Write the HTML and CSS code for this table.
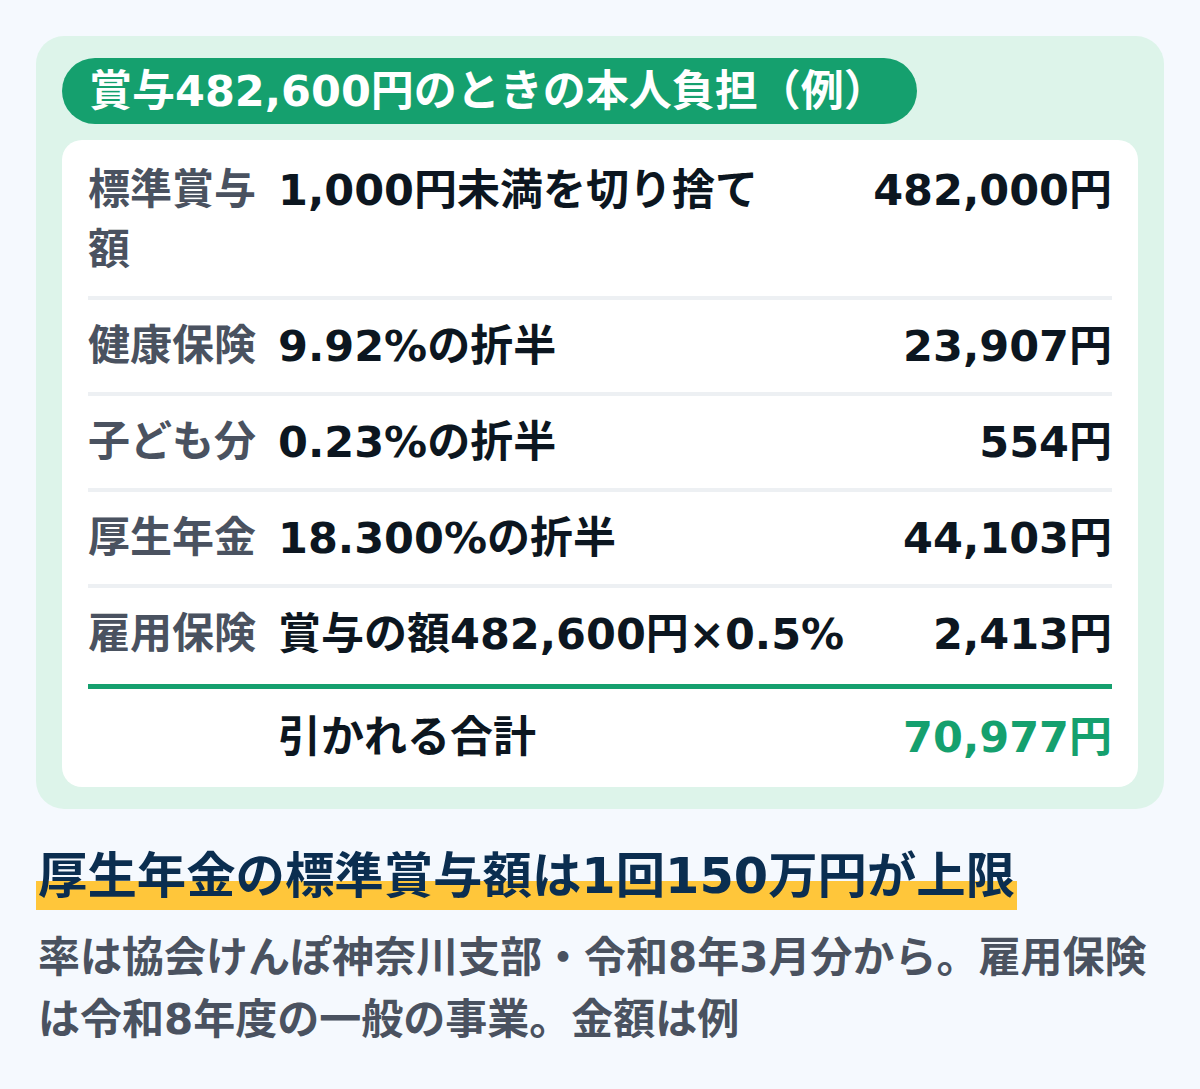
FILE: index.html
```html
<!DOCTYPE html>
<html lang="ja">
<head>
<meta charset="utf-8">
<title>賞与の本人負担</title>
<link rel="stylesheet" href="styles.css">
</head>
<body>
<section class="panel">
  <div class="pill">賞与482,600円のときの本人負担（例）</div>
  <div class="card">
    <div class="row">
      <div class="label">標準賞与額</div>
      <div class="value">1,000円未満を切り捨て</div>
      <div class="amount">482,000円</div>
    </div>
    <div class="row">
      <div class="label">健康保険</div>
      <div class="value">9.92%の折半</div>
      <div class="amount">23,907円</div>
    </div>
    <div class="row">
      <div class="label">子ども分</div>
      <div class="value">0.23%の折半</div>
      <div class="amount">554円</div>
    </div>
    <div class="row">
      <div class="label">厚生年金</div>
      <div class="value">18.300%の折半</div>
      <div class="amount">44,103円</div>
    </div>
    <div class="row row-last">
      <div class="label">雇用保険</div>
      <div class="value">賞与の額482,600円×0.5%</div>
      <div class="amount">2,413円</div>
    </div>
    <div class="row row-total">
      <div class="label"></div>
      <div class="value">引かれる合計</div>
      <div class="amount amount-total">70,977円</div>
    </div>
  </div>
</section>
<h2 class="heading"><span class="hl">厚生年金の標準賞与額は1回150万円が上限</span></h2>
<p class="note">率は協会けんぽ神奈川支部・令和8年3月分から。雇用保険は令和8年度の一般の事業。金額は例</p>
</body>
</html>
```
FILE: styles.css
```css
* { box-sizing: border-box; }

body {
  margin: 0;
  padding: 36px 36px 0;
  background: #f5f9fe;
  font-family: "DejaVu Sans", "Noto Sans CJK JP", sans-serif;
  font-weight: 700;
  color: #0c1620;
}

.panel {
  background: #ddf4ea;
  border-radius: 28px;
  padding: 22px 26px 22px;
}

.pill {
  display: inline-block;
  height: 66px;
  line-height: 66px;
  padding: 0 30px 0 27px;
  border-radius: 33px;
  background: #15a06e;
  color: #ffffff;
  font-size: 43px;
  white-space: nowrap;
}

.card {
  margin-top: 16px;
  background: #ffffff;
  border-radius: 20px;
  padding: 4px 26px 8px;
}

.row {
  display: grid;
  grid-template-columns: 168px 1fr auto;
  column-gap: 22px;
  align-items: start;
  padding: 16px 0;
  font-size: 43px;
  line-height: 60px;
  border-bottom: 4px solid #edf0f3;
}

.row-last {
  padding-bottom: 20px;
  border-bottom: 5px solid #15a06e;
}

.row-total {
  padding: 18px 0 12px;
  border-bottom: none;
}

.label { color: #4a5260; font-size: 42px; }
.value { color: #0c1620; white-space: nowrap; }
.amount { color: #0c1620; text-align: right; white-space: nowrap; }
.amount-total { color: #15a06e; }

.heading {
  margin: 39px 0 0;
  font-size: 49.4px;
  font-weight: 700;
  color: #0b2e50;
  line-height: 1;
}

.hl {
  display: inline-block;
  line-height: 56px;
  padding: 0 2px 6px;
  background: linear-gradient(to bottom, transparent 53%, #ffc63a 53%);
  white-space: nowrap;
}

.note {
  margin: 17px 0 0;
  font-size: 42px;
  line-height: 62px;
  color: #4a5260;
  padding-left: 2px;
}
```
